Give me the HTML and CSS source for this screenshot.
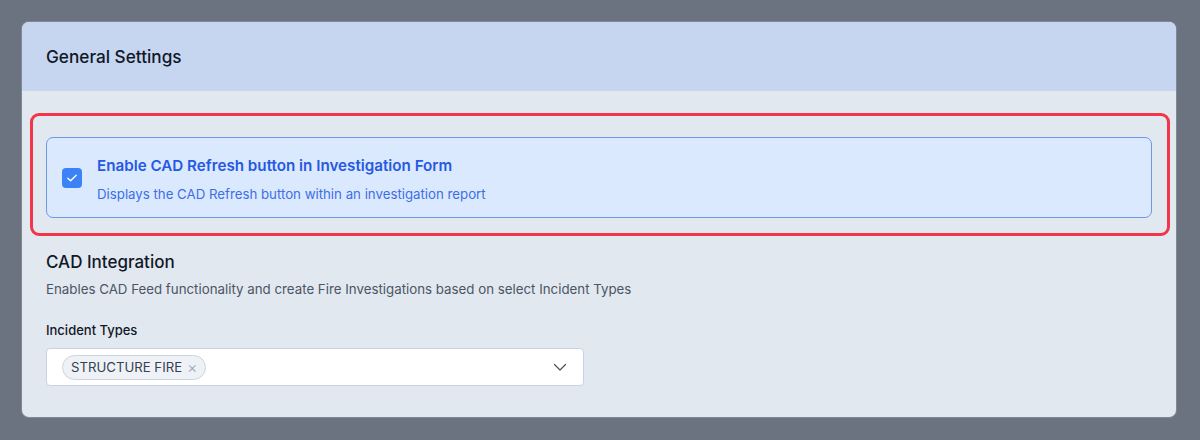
FILE: index.html
```html
<!doctype html>
<html lang="en">
<head>
    <meta charset="UTF-8">
    <meta name="viewport" content="width=device-width, initial-scale=1.0">
    <title>General Settings</title>
    <link rel="stylesheet" href="styles.css">
</head>
<body>
<div class="card">
    <div class="card-header">
        <h1>General Settings</h1>
    </div>
    <div class="card-body">
        <div class="highlight">
            <label class="option">
                <span class="checkbox">
                    <svg width="14" height="14" viewBox="0 0 14 14" fill="none">
                        <path d="M2.8 7.2l2.8 2.6 5.6-5.6" stroke="#fff" stroke-width="1.4" stroke-linecap="round" stroke-linejoin="round"/>
                    </svg>
                </span>
                <span class="option-text">
                    <span class="option-title">Enable CAD Refresh button in Investigation Form</span>
                    <span class="option-desc">Displays the CAD Refresh button within an investigation report</span>
                </span>
            </label>
        </div>

        <h2>CAD Integration</h2>
        <p class="section-desc">Enables CAD Feed functionality and create Fire Investigations based on select Incident Types</p>

        <div class="field-label">Incident Types</div>
        <div class="select">
            <div class="chips">
                <span class="chip">STRUCTURE FIRE <span class="chip-x">&times;</span></span>
            </div>
            <svg class="chevron" width="14" height="14" viewBox="0 0 14 14" fill="none">
                <path d="M1.5 4.5l5.5 5.5 5.5-5.5" stroke="#4b5563" stroke-width="1.3" stroke-linecap="round" stroke-linejoin="round"/>
            </svg>
        </div>
    </div>
</div>
</body>
</html>
```

FILE: styles.css
```css
body {
    font-family: 'Inter', 'Liberation Sans', sans-serif;
    background-color: #6b7280;
    color: #111827;
    margin: 0;
    padding: 22px 24px 22px 22px;
}

.card {
    background: #e2e8f0;
    border-radius: 7px;
    overflow: hidden;
    box-shadow: 0 0 0 1px rgba(255, 255, 255, 0.15);
}

.card-header {
    background: #c6d6f0;
    height: 69px;
    display: flex;
    align-items: center;
    padding: 0 24px;
}

h1 {
    margin: 0;
    font-size: 17.2px;
    font-weight: 500;
    color: #111827;
}

.card-body {
    padding: 22px 24px 31px 24px;
}

/* red outline around the highlighted option */
.highlight {
    margin: 0 -18px 0 -16px;
    padding: 21px 15px 15px 13px;
    border: 3px solid #f23548;
    border-radius: 9px;
}

.option {
    display: flex;
    align-items: center;
    gap: 15px;
    background: #dbe9fe;
    border: 1px solid #7096e8;
    border-radius: 7px;
    padding: 15px 15px 14px;
}

.checkbox {
    width: 20px;
    height: 20px;
    flex: none;
    border-radius: 4px;
    background: #3b82f6;
    display: flex;
    align-items: center;
    justify-content: center;
}

.option-text {
    display: flex;
    flex-direction: column;
    gap: 9px;
    padding-top: 3px;
}

.option-title {
    font-size: 15.2px;
    line-height: 20px;
    font-weight: 600;
    color: #2559e3;
}

.option-desc {
    font-size: 13.25px;
    line-height: 18px;
    color: #3b6fe6;
}

h2 {
    margin: 14px 0 0;
    font-size: 17px;
    line-height: 24px;
    font-weight: 500;
    color: #111827;
}

.section-desc {
    margin: 5px 0 0;
    font-size: 13.3px;
    line-height: 20px;
    color: #4b5563;
}

.field-label {
    margin-top: 22px;
    font-size: 13px;
    line-height: 18px;
    font-weight: 500;
    color: #111827;
}

.select {
    margin-top: 9px;
    width: 538px;
    height: 38px;
    box-sizing: border-box;
    background: #fff;
    border: 1px solid #c9d3e1;
    border-radius: 4px;
    display: flex;
    align-items: center;
    justify-content: space-between;
    padding: 0 16px 0 15px;
}

.chip {
    display: inline-flex;
    align-items: center;
    gap: 5px;
    height: 25px;
    box-sizing: border-box;
    padding: 0 7px 0 8px;
    border: 1px solid #cbd5e1;
    border-radius: 13px;
    background: #eef2f7;
    font-size: 13.2px;
    color: #374151;
}

.chip-x {
    color: #9ca3af;
    font-size: 16px;
    font-weight: 300;
}
```
